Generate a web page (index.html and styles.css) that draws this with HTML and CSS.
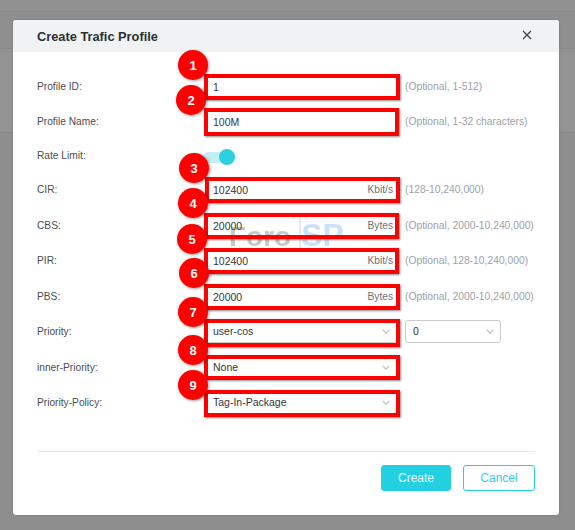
FILE: index.html
```html
<!DOCTYPE html>
<html lang="en">
<head>
  <meta charset="UTF-8" />
  <title>Create Trafic Profile</title>
  <link rel="stylesheet" href="styles.css">
</head>
<body>
  <!-- page behind the dialog -->
  <div class="backdrop">
    <div class="back-bar"></div>
    <div class="back-head"></div>
    <div class="back-panel"></div>
  </div>

  <div class="modal">
    <div class="modal-head">
      <h2>Create Trafic Profile</h2>
      <svg class="close" width="12" height="12" viewBox="0 0 12 12"><path d="M2 2l8 8M10 2l-8 8" /></svg>
    </div>

    <form class="form">
      <div class="row short">
        <label>Profile ID:</label>
        <div class="field">1</div>
        <span class="hint">(Optional, 1-512)</span>
      </div>
      <div class="row short">
        <label>Profile Name:</label>
        <div class="field">100M</div>
        <span class="hint">(Optional, 1-32 characters)</span>
      </div>
      <div class="row toggle-row">
        <label>Rate Limit:</label>
        <div class="toggle"><span class="knob"></span></div>
      </div>
      <div class="row">
        <label>CIR:</label>
        <div class="field">102400<span class="unit">Kbit/s</span></div>
        <span class="hint">(128-10,240,000)</span>
      </div>
      <div class="row">
        <label>CBS:</label>
        <div class="field">20000<span class="unit">Bytes</span></div>
        <span class="hint">(Optional, 2000-10,240,000)</span>
      </div>
      <div class="row">
        <label>PIR:</label>
        <div class="field">102400<span class="unit">Kbit/s</span></div>
        <span class="hint">(Optional, 128-10,240,000)</span>
      </div>
      <div class="row">
        <label>PBS:</label>
        <div class="field">20000<span class="unit">Bytes</span></div>
        <span class="hint">(Optional, 2000-10,240,000)</span>
      </div>
      <div class="row">
        <label>Priority:</label>
        <div class="field select">user-cos<svg class="chev" width="8" height="5" viewBox="0 0 10 6"><path d="M1 1l4 4 4-4" /></svg></div>
        <div class="field select small">0<svg class="chev" width="8" height="5" viewBox="0 0 10 6"><path d="M1 1l4 4 4-4" /></svg></div>
      </div>
      <div class="row">
        <label>inner-Priority:</label>
        <div class="field select">None<svg class="chev" width="8" height="5" viewBox="0 0 10 6"><path d="M1 1l4 4 4-4" /></svg></div>
      </div>
      <div class="row">
        <label>Priority-Policy:</label>
        <div class="field select">Tag-In-Package<svg class="chev" width="8" height="5" viewBox="0 0 10 6"><path d="M1 1l4 4 4-4" /></svg></div>
      </div>
    </form>

    <div class="modal-foot">
      <button class="btn btn-create" type="button">Create</button>
      <button class="btn btn-cancel" type="button">Cancel</button>
    </div>
  </div>

  <!-- annotations drawn on top of the screenshot -->
  <div class="watermark">
    <span class="wm-foro">Foro</span>
    <svg class="wm-bar" width="16" height="40" viewBox="0 0 16 40"><path d="M1 8C3 2 13 2 15 8M8 3v37" /></svg>
    <span class="wm-sp">SP</span>
  </div>

  <div class="box box-1"></div>
  <div class="box box-2"></div>
  <div class="box box-4"></div>
  <div class="box box-5"></div>
  <div class="box box-6"></div>
  <div class="box box-7"></div>
  <div class="box box-8"></div>
  <div class="box box-9"></div>
  <div class="box box-10"></div>

  <div class="num num-1">1</div>
  <div class="num num-2">2</div>
  <div class="num num-3">3</div>
  <div class="num num-4">4</div>
  <div class="num num-5">5</div>
  <div class="num num-6">6</div>
  <div class="num num-7">7</div>
  <div class="num num-8">8</div>
  <div class="num num-9">9</div>
</body>
</html>
```

FILE: styles.css
```css
html, body {
  margin: 0;
  padding: 0;
}
body {
  position: relative;
  width: 575px;
  height: 530px;
  overflow: hidden;
  font-family: "Liberation Sans", Arial, sans-serif;
  background-color: #8e8e8f;
}
.backdrop {
  display: flex;
  flex-direction: column;
  height: 100%;
}
.back-bar {
  height: 11px;
  background-color: #919192;
  border-bottom: 1px solid #858586;
}
.back-head {
  height: 36px;
  background-color: #8f8f90;
  border-bottom: 1px solid #868687;
}
.back-panel {
  height: 83px;
  background-color: #939394;
  border-bottom: 1px solid #868687;
}

.modal {
  position: absolute;
  left: 13px;
  top: 20px;
  width: 546px;
  height: 495px;
  display: flex;
  flex-direction: column;
  background-color: #fff;
  border-radius: 3px;
  box-shadow: 0 0 2px rgba(0, 0, 0, 0.25);
}
.modal-head {
  height: 32px;
  display: flex;
  align-items: center;
  justify-content: space-between;
  padding: 0 26px 0 24px;
  background-color: #f1f2f4;
  border-radius: 3px 3px 0 0;
}
.modal-head h2 {
  margin: 0;
  font-size: 12.8px;
  font-weight: bold;
  color: #2b2f36;
}
.close {
  margin-top: -2px;
  fill: none;
  stroke: #3c4452;
  stroke-width: 1.3;
}

.form {
  padding: 17px 24px 0;
}
.row {
  display: grid;
  grid-template-columns: 168px 192px auto;
  align-items: center;
  justify-content: start;
  height: 35.5px;
  font-size: 10.5px;
}
.short {
  height: 34.8px;
}
.toggle-row {
  height: 33.6px;
}
.row label {
  font-size: 10.2px;
  color: #4a4d52;
}
.field {
  display: flex;
  align-items: center;
  justify-content: space-between;
  box-sizing: border-box;
  height: 23px;
  padding: 1px 3px 0 7px;
  border: 1px solid #ccc;
  border-radius: 3px;
  color: #33363b;
  background-color: #fff;
}
.unit {
  margin-top: -1px;
  font-size: 10.2px;
  color: #6d7075;
}
.hint {
  margin-left: 8px;
  font-size: 10.3px;
  white-space: nowrap;
  color: #9ea1a6;
}
.select {
  padding: 0 6px 1px 7px;
}
.select .chev {
  margin-top: 1px;
  fill: none;
  stroke: #b9bbbf;
  stroke-width: 1.4;
}
.small {
  width: 96px;
  margin-left: 8px;
}

.toggle {
  position: relative;
  width: 24px;
  height: 11px;
  margin: 4px 0 0 -2px;
  border-radius: 6px;
  background-color: #c3eef3;
}
.knob {
  position: absolute;
  right: -8px;
  top: -3px;
  width: 16px;
  height: 16px;
  border-radius: 50%;
  background-color: #2fd0dd;
}

.modal-foot {
  display: flex;
  justify-content: flex-end;
  gap: 12px;
  margin: 30px 24px 0;
  padding-top: 13px;
  border-top: 1px solid #e4e6e8;
}
.btn {
  box-sizing: border-box;
  height: 26px;
  padding: 0;
  border: 1px solid #22d0e2;
  border-radius: 3px;
  font-family: inherit;
  font-size: 12px;
}
.btn-create {
  width: 70px;
  background-color: #22d0e2;
  color: #e8fbfd;
}
.btn-cancel {
  width: 72px;
  background-color: #fff;
  color: #34cfe0;
}

.watermark {
  position: absolute;
  left: 229px;
  top: 214px;
  display: flex;
  align-items: baseline;
  gap: 10px;
  font-weight: bold;
  line-height: 42px;
  filter: blur(0.5px);
}
.wm-foro {
  font-size: 28px;
  color: rgba(90, 90, 90, 0.34);
}
.wm-sp {
  font-size: 32px;
  color: rgba(60, 150, 230, 0.28);
}
.wm-bar {
  position: absolute;
  left: 63px;
  top: -3px;
  fill: none;
  stroke: rgba(60, 150, 230, 0.22);
  stroke-width: 1.5;
}

.box {
  position: absolute;
  box-sizing: border-box;
  border: 4px solid #f00;
  box-shadow: 1px 1px 2px rgba(0, 0, 0, 0.45);
}
.box-1 { left: 204px; top: 74px; width: 196px; height: 26px; }
.box-2 { left: 204px; top: 108px; width: 195px; height: 28px; }
.box-4 { left: 205px; top: 177px; width: 195px; height: 26px; }
.box-5 { left: 204px; top: 213px; width: 195px; height: 26px; }
.box-6 { left: 204px; top: 248px; width: 195px; height: 26px; }
.box-7 { left: 204px; top: 284px; width: 196px; height: 26px; }
.box-8 { left: 204px; top: 319px; width: 196px; height: 28px; }
.box-9 { left: 204px; top: 355px; width: 196px; height: 25px; }
.box-10 { left: 204px; top: 390px; width: 196px; height: 27px; }

.num {
  position: absolute;
  display: flex;
  align-items: center;
  justify-content: center;
  width: 30px;
  height: 30px;
  border-radius: 50%;
  background-color: #f00;
  color: #fff;
  font-size: 13px;
  font-weight: bold;
  box-shadow: 1px 1px 3px rgba(0, 0, 0, 0.4);
}
.num-1 { left: 178px; top: 50px; }
.num-2 { left: 176px; top: 85px; }
.num-3 { left: 179px; top: 153px; }
.num-4 { left: 178px; top: 188px; }
.num-5 { left: 177px; top: 224px; }
.num-6 { left: 179px; top: 258px; }
.num-7 { left: 178px; top: 297px; }
.num-8 { left: 178px; top: 335px; }
.num-9 { left: 178px; top: 370px; }
```
